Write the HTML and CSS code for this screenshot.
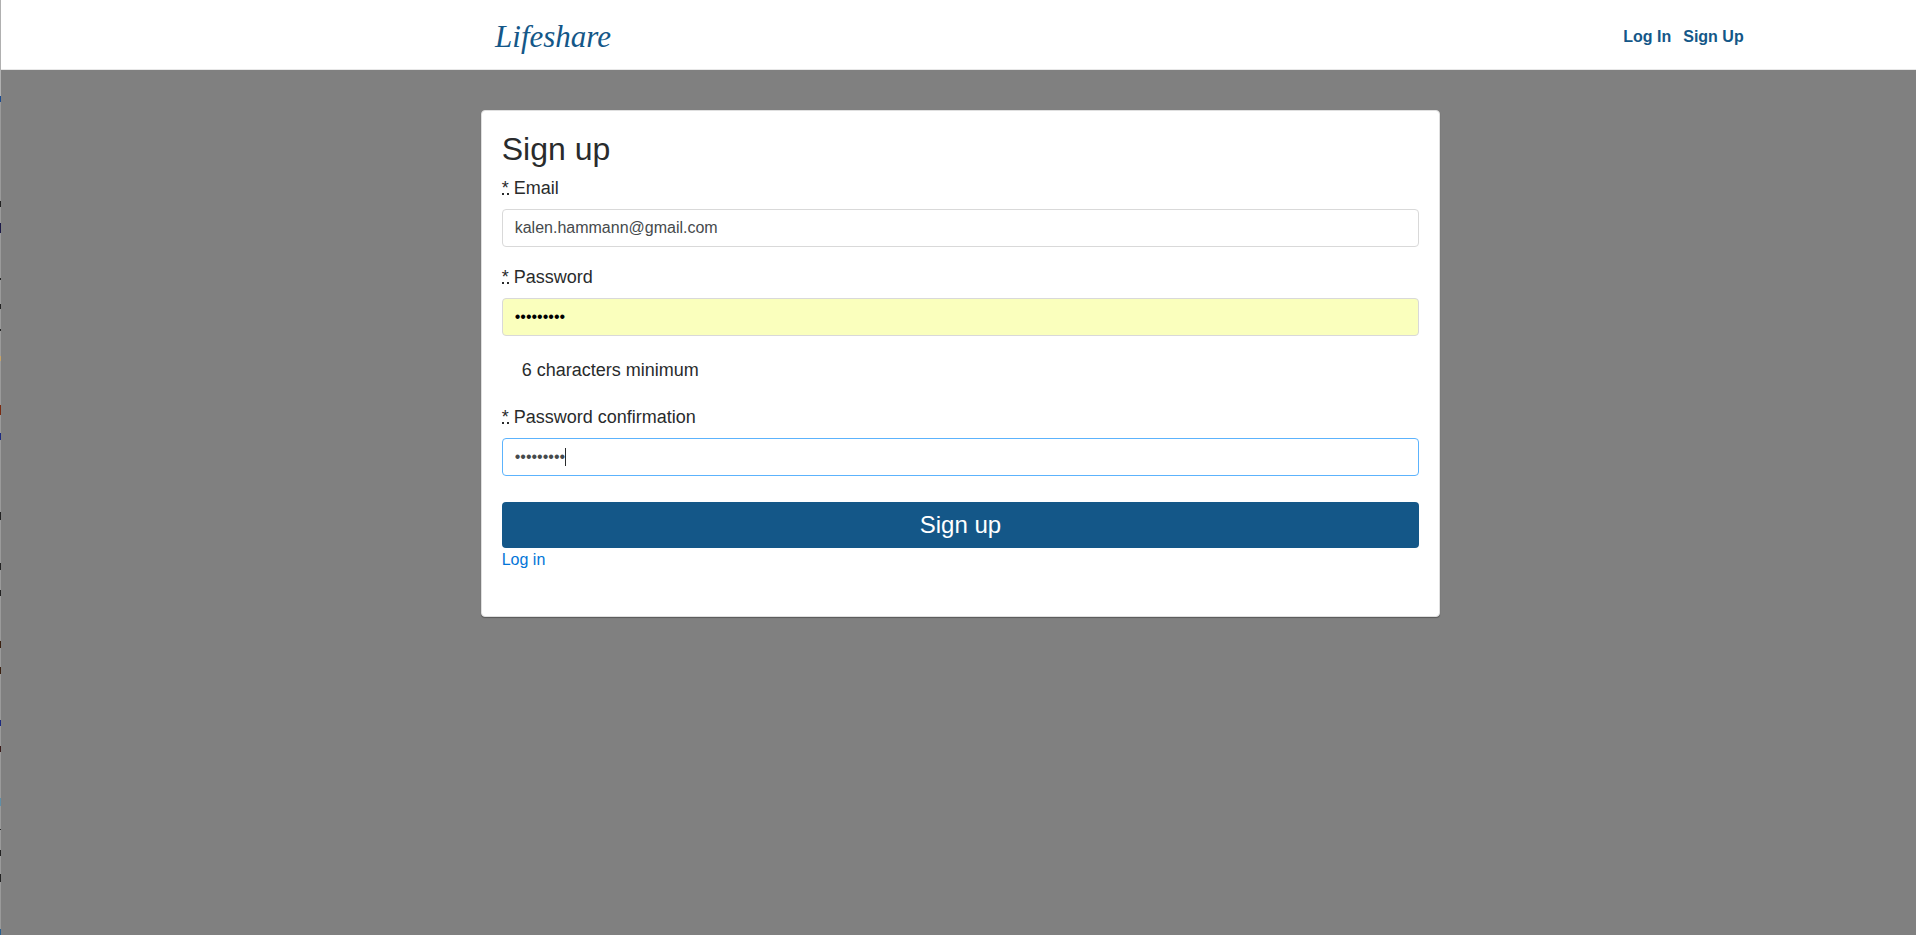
FILE: index.html
```html
<!DOCTYPE html>
<html lang="en">
<head>
<meta charset="utf-8">
<title>Lifeshare</title>
<link rel="stylesheet" href="styles.css">
</head>
<body>
<header class="navbar">
  <a class="brand" href="#">Lifeshare</a>
  <nav class="links">
    <a href="#">Log In</a>
    <a href="#">Sign Up</a>
  </nav>
</header>
<main class="card">
  <h2 class="title">Sign up</h2>
  <form>
    <div class="field">
      <label for="email"><abbr title="required">*</abbr> Email</label>
      <input id="email" class="control" type="email" value="kalen.hammann@gmail.com">
    </div>
    <div class="field">
      <label for="password"><abbr title="required">*</abbr> Password</label>
      <input id="password" class="control filled" type="password" value="lifeshare">
      <p class="hint">6 characters minimum</p>
    </div>
    <div class="field">
      <label for="confirmation"><abbr title="required">*</abbr> Password confirmation</label>
      <div class="entry">
        <input id="confirmation" class="control focused" type="password" value="lifeshare">
        <span class="caret"></span>
      </div>
    </div>
    <button class="submit" type="submit">Sign up</button>
  </form>
  <a class="login" href="#">Log in</a>
</main>
</body>
</html>
```
FILE: styles.css
```css
* {
  box-sizing: border-box;
}

html {
  background: #808080;
}

/* The window edge is a one-pixel strip with small coloured marks. */
body {
  margin: 0;
  min-height: 100vh;
  padding-left: 1px;
  background: linear-gradient(
    #b0b0b0 96px, #1a4a90 96px 102px, #9a9a9a 102px 201px,
    #222 201px 207px, #9a9a9a 207px 223px, #1c1a48 223px 233px,
    #9a9a9a 233px 278px, #222 278px 280px, #9a9a9a 280px 304px,
    #222 304px 309px, #9a9a9a 309px 329px, #222 329px 331px,
    #9a9a9a 331px 356px, #c8a468 356px 361px, #9a9a9a 361px 405px,
    #7a2a10 405px 415px, #9a9a9a 415px 433px, #1c2a80 433px 440px,
    #9a9a9a 440px 512px, #222 512px 520px, #9a9a9a 520px 563px,
    #222 563px 570px, #9a9a9a 570px 590px, #222 590px 596px,
    #9a9a9a 596px 641px, #3a2010 641px 648px, #9a9a9a 648px 667px,
    #3a2010 667px 674px, #9a9a9a 674px 720px, #1c2a80 720px 726px,
    #9a9a9a 726px 746px, #3a1a18 746px 752px, #9a9a9a 752px 798px,
    #5f8fa8 798px 806px, #9a9a9a 806px 829px, #222 829px 830px,
    #9a9a9a 830px 850px, #222 850px 856px, #9a9a9a 856px 874px,
    #222 874px 882px, #9a9a9a 882px 929px, #2a6090 929px
  ) no-repeat 0 0 / 1px 100%;
  font: 16px/24px "Helvetica Neue", Helvetica, "Liberation Sans", Arial, sans-serif;
  color: #292b2c;
}

.navbar {
  display: flex;
  align-items: center;
  justify-content: space-between;
  height: 70px;
  padding: 5px 9% 0 25.8%;
  background: #fff;
  border-bottom: 1px solid #e7e7e7;
}

.brand {
  font: italic 31px/40px "Apple Chancery", "Liberation Serif", serif;
  color: #145788;
  text-decoration: none;
}

.links {
  display: flex;
  gap: 12px;
}

.links a {
  color: #145788;
  font-weight: bold;
  text-decoration: none;
}

.card {
  width: 50.1%;
  margin: 40px 0 0 25.05%;
  padding: 21px 20px 44px;
  background: #fff;
  border: 1px solid #dfdfdf;
  border-radius: 4px;
  box-shadow: 0 1px 1px rgba(0, 0, 0, 0.3);
}

.title {
  margin: 0 0 8px;
  font-size: 32px;
  line-height: 35px;
  font-weight: normal;
}

.field {
  margin-bottom: 17px;
}

.field label {
  display: block;
  margin-bottom: 7px;
  font-size: 18px;
  line-height: 27px;
}

abbr {
  display: inline-block;
  height: 18px;
  line-height: 22px;
  text-decoration: none;
  border-bottom: 2px dotted #292b2c;
}

.control {
  display: block;
  width: 100%;
  height: 38px;
  padding: 8px 12px;
  font: inherit;
  line-height: 20px;
  color: #464a4c;
  background: #fff;
  border: 1px solid #d9d9d9;
  border-radius: 4px;
  outline: 0;
}

.filled {
  color: #000;
  background: #faffbd;
}

.focused {
  border-color: #5cb3fd;
}

.entry {
  position: relative;
}

.caret {
  position: absolute;
  top: 10px;
  left: 63px;
  width: 1px;
  height: 18px;
  background: #292b2c;
}

.hint {
  margin: 21px 20px 20px;
  font-size: 18px;
  line-height: 27px;
}

.submit {
  display: block;
  width: 100%;
  height: 46px;
  margin-top: 26px;
  font: inherit;
  font-size: 24px;
  color: #fff;
  background: #145788;
  border: 0;
  border-radius: 4px;
}

.login {
  color: #0275d8;
  text-decoration: none;
}
```
